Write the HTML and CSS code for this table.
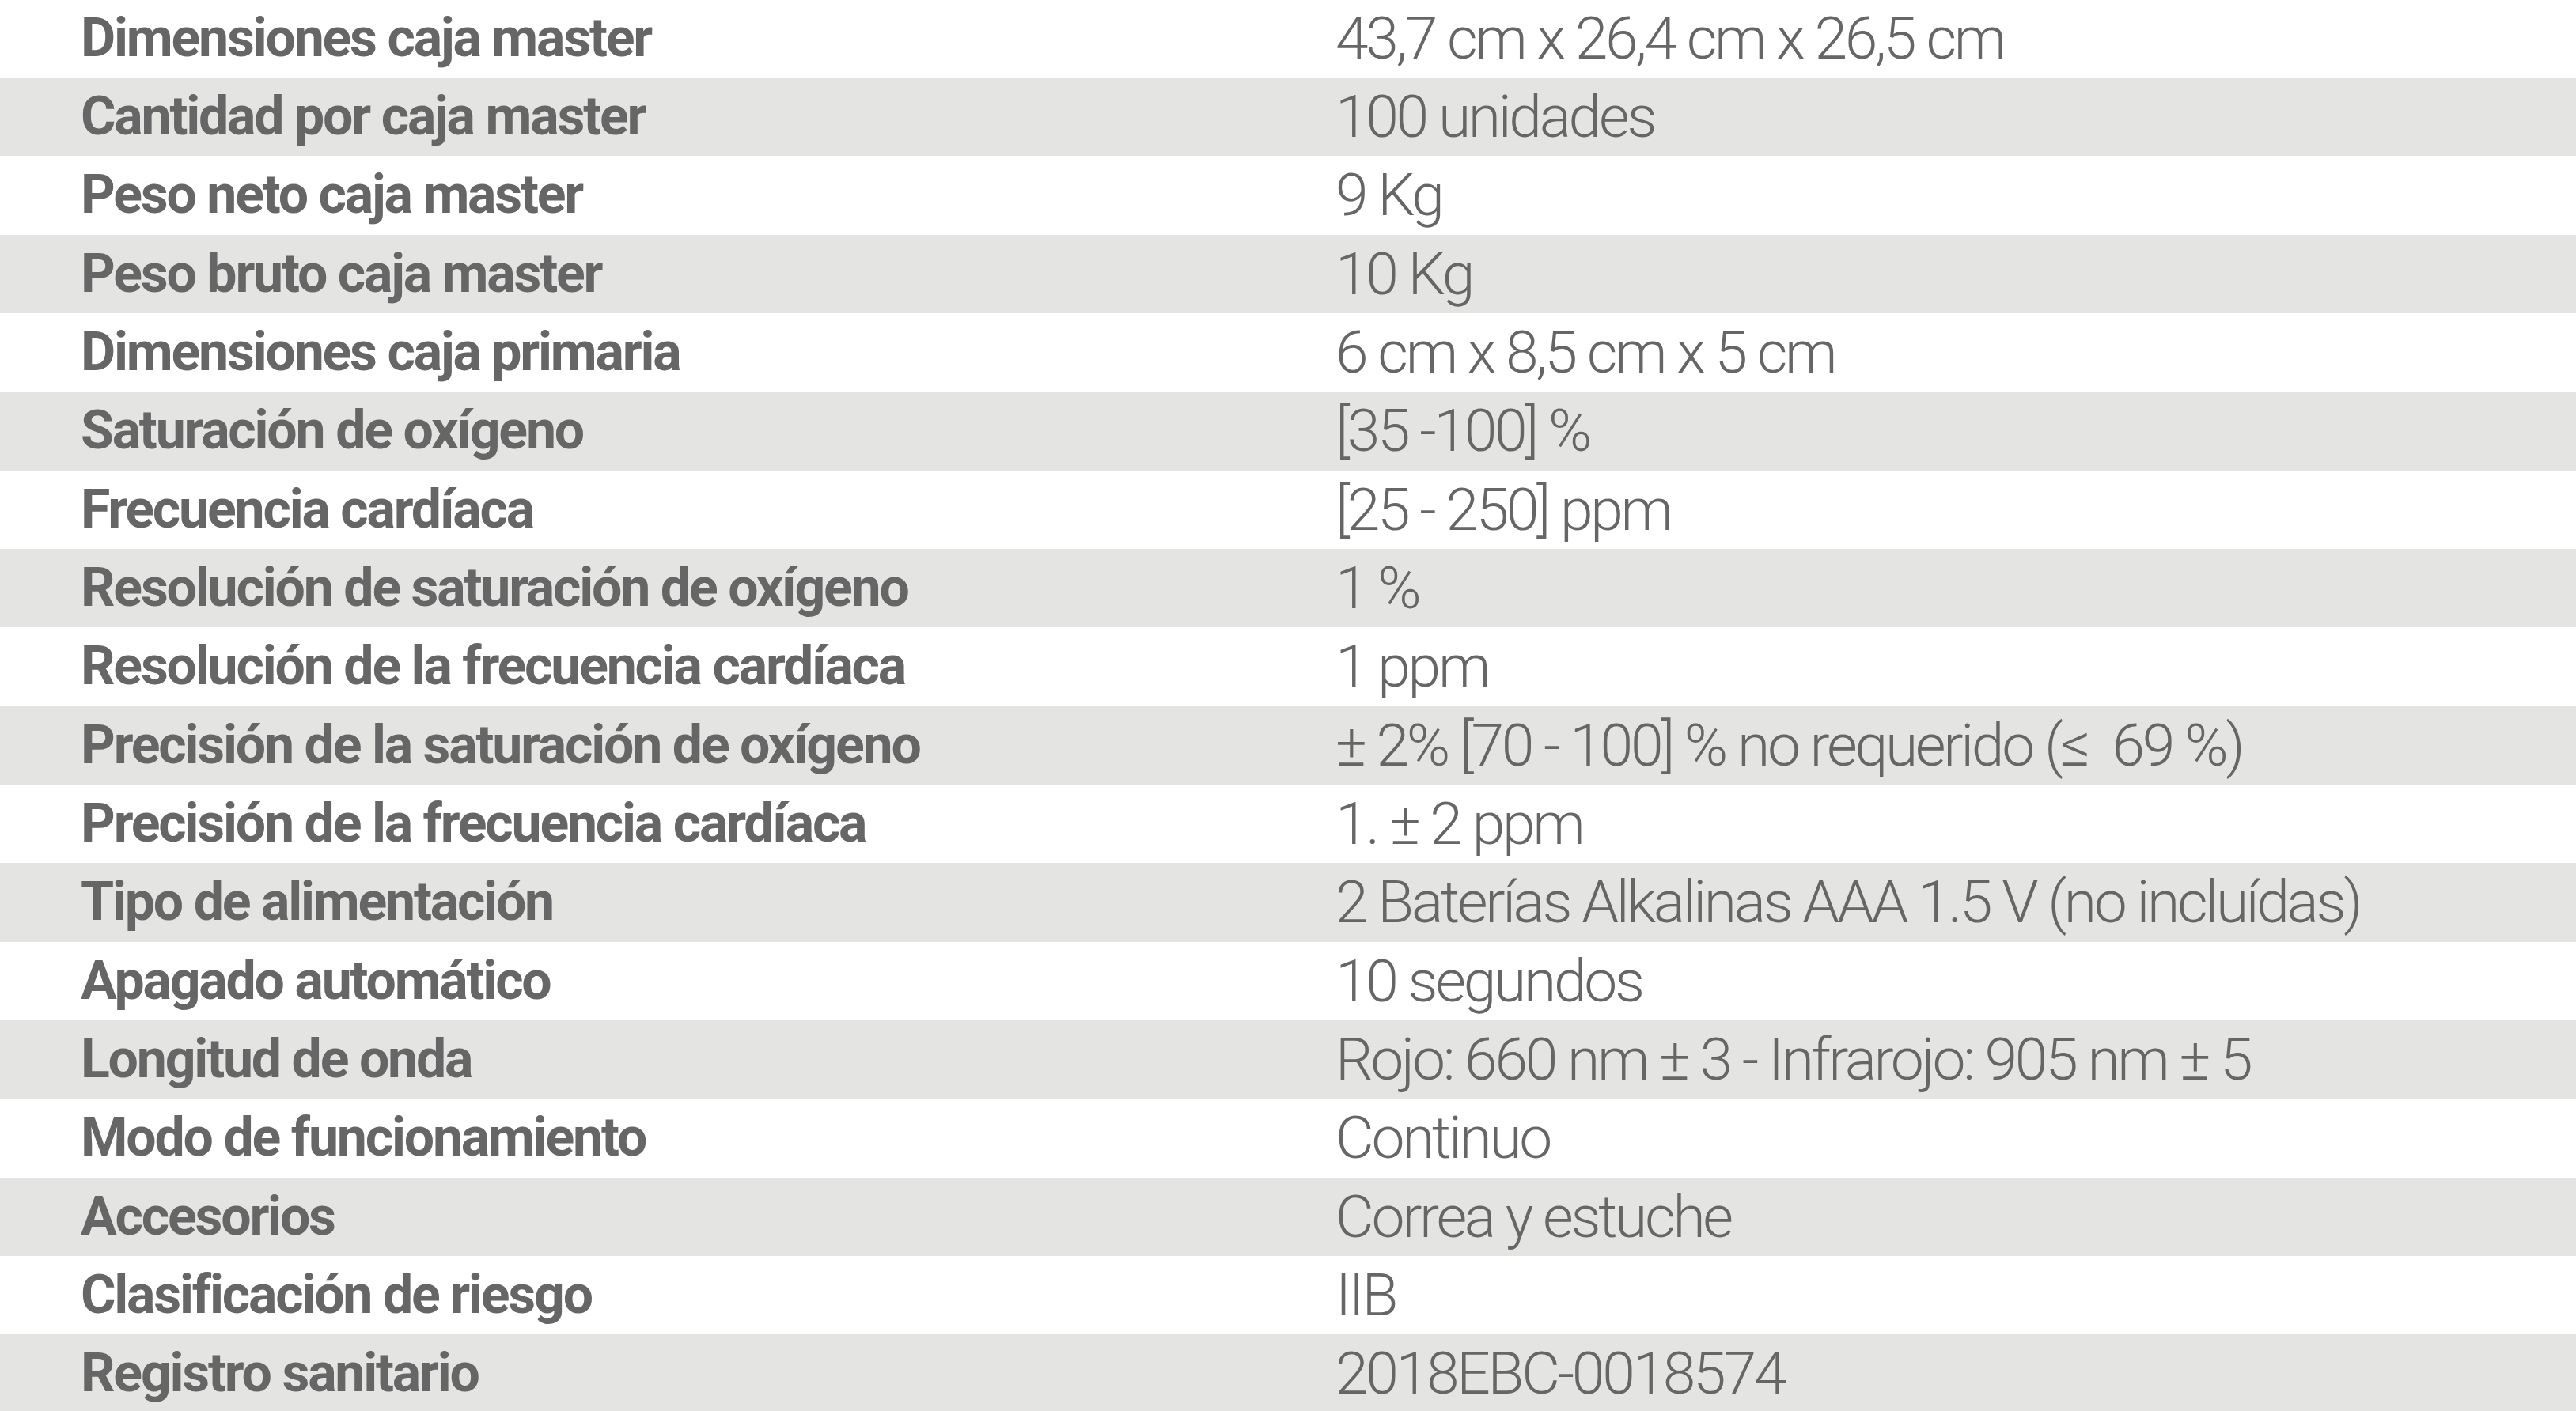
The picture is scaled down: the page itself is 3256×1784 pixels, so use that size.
FILE: index.html
```html
<!DOCTYPE html>
<html lang="es">
<head>
<meta charset="utf-8">
<title>Especificaciones</title>
<link rel="stylesheet" href="styles.css">
</head>
<body>
<div class="specs">
  <div class="row"><div class="label">Dimensiones caja master</div><div class="value">43,7 cm x 26,4 cm x 26,5 cm</div></div>
  <div class="row alt"><div class="label">Cantidad por caja master</div><div class="value">100 unidades</div></div>
  <div class="row"><div class="label">Peso neto caja master</div><div class="value">9 Kg</div></div>
  <div class="row alt"><div class="label">Peso bruto caja master</div><div class="value">10 Kg</div></div>
  <div class="row"><div class="label">Dimensiones caja primaria</div><div class="value">6 cm x 8,5 cm x 5 cm</div></div>
  <div class="row alt"><div class="label">Saturación de oxígeno</div><div class="value">[35 -100] %</div></div>
  <div class="row"><div class="label">Frecuencia cardíaca</div><div class="value">[25 - 250] ppm</div></div>
  <div class="row alt"><div class="label">Resolución de saturación de oxígeno</div><div class="value">1 %</div></div>
  <div class="row"><div class="label">Resolución de la frecuencia cardíaca</div><div class="value">1 ppm</div></div>
  <div class="row alt"><div class="label">Precisión de la saturación de oxígeno</div><div class="value">± 2% [70 - 100] % no requerido (≤&nbsp; 69 %)</div></div>
  <div class="row"><div class="label">Precisión de la frecuencia cardíaca</div><div class="value">1. ± 2 ppm</div></div>
  <div class="row alt"><div class="label">Tipo de alimentación</div><div class="value">2 Baterías Alkalinas AAA 1.5 V (no incluídas)</div></div>
  <div class="row"><div class="label">Apagado automático</div><div class="value">10 segundos</div></div>
  <div class="row alt"><div class="label">Longitud de onda</div><div class="value">Rojo: 660 nm ± 3 - Infrarojo: 905 nm ± 5</div></div>
  <div class="row"><div class="label">Modo de funcionamiento</div><div class="value">Continuo</div></div>
  <div class="row alt"><div class="label">Accesorios</div><div class="value">Correa y estuche</div></div>
  <div class="row"><div class="label">Clasificación de riesgo</div><div class="value">IIB</div></div>
  <div class="row alt"><div class="label">Registro sanitario</div><div class="value">2018EBC-0018574</div></div>
</div>
</body>
</html>
```
FILE: styles.css
```css
html, body {
  margin: 0;
  padding: 0;
  background: #ffffff;
  overflow: hidden;
}
body {
  width: 3256px;
  height: 1784px;
}
.specs {
  margin-top: -1.3px;
  display: grid;
  grid-auto-rows: 99.33px;
}
.row {
  display: grid;
  grid-template-columns: 1688px 1fr;
  background: #ffffff;
  color: #666666;
  line-height: 99.33px;
  white-space: nowrap;
}
.row.alt {
  background: #e4e4e3;
}
.label {
  padding-left: 102px;
  font-family: Roboto, "Liberation Sans", sans-serif;
  font-weight: 700;
  font-size: 68px;
  letter-spacing: -2.2px;
}
.value {
  font-family: Roboto, "Liberation Sans", sans-serif;
  font-weight: 300;
  font-size: 75px;
  letter-spacing: -3.3px;
}
```
